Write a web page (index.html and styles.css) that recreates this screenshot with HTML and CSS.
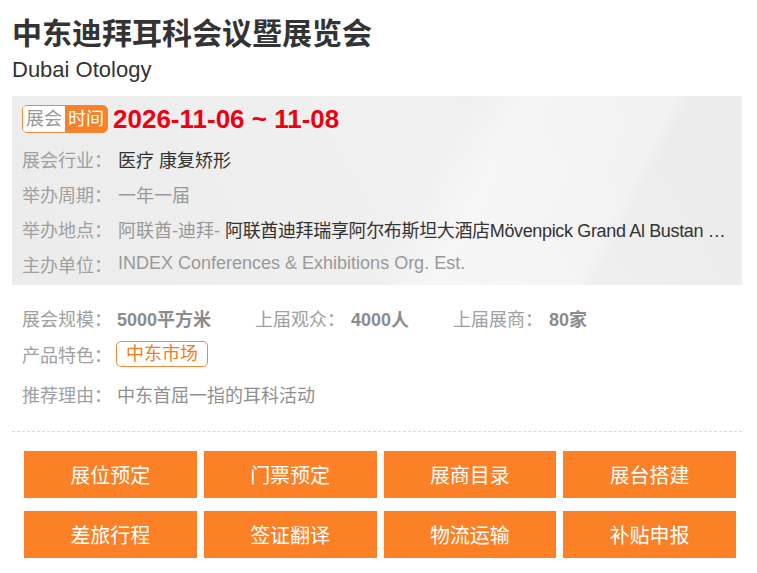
FILE: index.html
```html
<!DOCTYPE html>
<html lang="zh-CN">
<head>
<meta charset="utf-8">
<title>中东迪拜耳科会议暨展览会</title>
<link rel="stylesheet" href="styles.css">
</head>
<body>
<div class="page">
  <h1 class="title">中东迪拜耳科会议暨展览会</h1>
  <div class="subtitle">Dubai Otology</div>

  <div class="info-box">
    <div class="date-row">
      <span class="date-tag"><span class="tag-a">展会</span><span class="tag-b">时间</span></span>
      <span class="date">2026-11-06 ~ 11-08</span>
    </div>
    <div class="row"><span class="label">展会行业：</span><span class="val dark">医疗 康复矫形</span></div>
    <div class="row"><span class="label">举办周期：</span><span class="val">一年一届</span></div>
    <div class="row"><span class="label">举办地点：</span><span class="val">阿联酋-迪拜- <span class="dark tight">阿联酋迪拜瑞享阿尔布斯坦大酒店Mövenpick Grand Al Bustan …</span></span></div>
    <div class="row"><span class="label">主办单位：</span><span class="val">INDEX Conferences &amp; Exhibitions Org. Est.</span></div>
  </div>

  <div class="extra">
    <div class="row stats">
      <span class="stat"><span class="label">展会规模：</span><b class="num">5000平方米</b></span>
      <span class="stat"><span class="slabel">上届观众：</span><b class="num">4000人</b></span>
      <span class="stat"><span class="slabel">上届展商：</span><b class="num">80家</b></span>
    </div>
    <div class="row"><span class="label">产品特色：</span><span class="feature">中东市场</span></div>
    <div class="row reason"><span class="label">推荐理由：</span><span class="val reason-val">中东首屈一指的耳科活动</span></div>
  </div>

  <div class="divider"></div>

  <div class="buttons">
    <a class="btn">展位预定</a>
    <a class="btn">门票预定</a>
    <a class="btn">展商目录</a>
    <a class="btn">展台搭建</a>
    <a class="btn">差旅行程</a>
    <a class="btn">签证翻译</a>
    <a class="btn">物流运输</a>
    <a class="btn">补贴申报</a>
  </div>
</div>
</body>
</html>
```

FILE: styles.css
```css
* { box-sizing: border-box; }
html, body { margin: 0; padding: 0; background: #fff; }
body {
  font-family: "Liberation Sans", Arial, "Noto Sans CJK SC", sans-serif;
  color: #333;
}
.page {
  width: 730px;
  margin-left: 12px;
}
.title {
  margin: 0;
  padding-top: 13px;
  font-size: 30px;
  line-height: 42px;
  font-weight: bold;
  color: #333;
}
.subtitle {
  font-size: 22px;
  line-height: 30px;
  color: #333;
}
.info-box {
  margin-top: 11px;
  padding: 9px 10px 4px;
  background:
    linear-gradient(118deg, rgba(255,255,255,0) 0%, rgba(255,255,255,0) 55%, rgba(255,255,255,0.4) 62%, rgba(255,255,255,0.3) 80%, rgba(255,255,255,0) 82%),
    linear-gradient(60deg, rgba(255,255,255,0) 0%, rgba(255,255,255,0.25) 60%, rgba(255,255,255,0) 90%),
    #ececec;
}
.date-row {
  display: flex;
  align-items: center;
  height: 28px;
  margin-bottom: 8px;
}
.date-tag {
  display: inline-flex;
  border: 1px solid #f0883a;
  border-radius: 5px;
  overflow: hidden;
  font-size: 18px;
  line-height: 26px;
}
.tag-a {
  padding: 0 3px;
  background: #fff;
  color: #999;
}
.tag-b {
  padding: 0 3px;
  background: #f7822a;
  color: #fff;
}
.date {
  margin-left: 5px;
  font-size: 26px;
  font-weight: bold;
  color: #ee0010;
  line-height: 28px;
}
.row {
  display: flex;
  align-items: center;
  height: 35px;
  font-size: 18px;
  white-space: nowrap;
  overflow: hidden;
}
.label {
  width: 96px;
  flex: none;
  color: #a0a0a0;
}
.val { color: #999; overflow: hidden; }
.val.dark, .dark { color: #333; }
.tight { letter-spacing: -0.35px; }
.extra {
  margin-top: 15px;
  padding-left: 10px;
}
.extra .row { height: 36px; }
.extra .reason { margin-top: 4px; }
.stat {
  display: inline-flex;
  align-items: center;
  margin-right: 44px;
}
.slabel { color: #a0a0a0; margin-right: 6px; }
.stat .label { width: 95px; }
.num {
  color: #8c8c8c;
  font-weight: bold;
}
.feature {
  display: inline-block;
  margin-left: -2px;
  padding: 0 9px;
  height: 26px;
  line-height: 24px;
  border: 1px solid #f0883a;
  border-radius: 5px;
  color: #f47b20;
  font-size: 18px;
}
.reason .label { width: 95px; }
.reason-val { color: #8f8f8f; }
.divider {
  margin-top: 19px;
  border-top: 1px dashed #d9d9d9;
}
.buttons {
  display: grid;
  grid-template-columns: repeat(4, 1fr);
  column-gap: 7px;
  row-gap: 13px;
  width: 712px;
  margin: 19px 0 0 12px;
}
.btn {
  display: flex;
  align-items: center;
  justify-content: center;
  height: 47px;
  background: #fc8025;
  color: #fff;
  font-size: 20px;
  text-decoration: none;
}
```
